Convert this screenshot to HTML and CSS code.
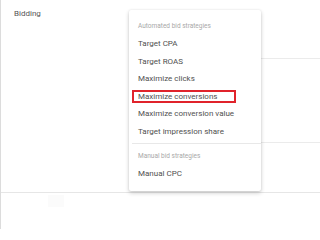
FILE: index.html
```html
<!DOCTYPE html>
<html>
<head>
<meta charset="utf-8">
<link rel="stylesheet" href="styles.css">
</head>
<body>
<div class="page">
  <section class="section">
    <div class="label">Bidding</div>
    <div class="content">
      <div class="row r1"></div>
      <div class="row r2"></div>
      <div class="row r3"></div>
    </div>
    <div class="menu">
      <div class="menu-header">Automated bid strategies</div>
      <div class="item">Target CPA</div>
      <div class="item">Target ROAS</div>
      <div class="item">Maximize clicks</div>
      <div class="item highlighted">Maximize conversions<span class="mark"></span></div>
      <div class="item">Maximize conversion value</div>
      <div class="item">Target impression share</div>
      <div class="divider"></div>
      <div class="menu-header">Manual bid strategies</div>
      <div class="item">Manual CPC</div>
    </div>
  </section>
  <div class="footer"><div class="ghost"></div></div>
</div>
</body>
</html>
```

FILE: styles.css
```css
html, body {
  margin: 0;
  padding: 0;
  background: #fff;
}
body {
  font-family: Roboto, "Liberation Sans", sans-serif;
  height: 229px;
  overflow: hidden;
}
.page {
  height: 229px;
  border-left: 1px solid #dcdcdc;
  box-sizing: border-box;
}
.section {
  position: relative;
  display: flex;
  height: 193px;
  box-sizing: border-box;
  border-bottom: 1px solid #e6e6e6;
}
.label {
  width: 130px;
  padding: 9px 0 0 13px;
  box-sizing: border-box;
  font-size: 8px;
  line-height: 10px;
  color: #555;
}
.content {
  flex: 1;
  display: flex;
  flex-direction: column;
}
.row {
  box-sizing: border-box;
}
.r1 {
  height: 59px;
  border-bottom: 1px solid #ebebeb;
}
.r2 {
  height: 84px;
  border-bottom: 1px solid #ebebeb;
}
.r3 {
  flex: 1;
}
.menu {
  position: absolute;
  left: 128px;
  top: 10px;
  width: 132px;
  padding: 8px 0 8.5px;
  background: #fff;
  box-shadow: 0 2px 4px rgba(0,0,0,0.2), 0 0 2px rgba(0,0,0,0.1);
  border-radius: 2px;
}
.menu-header {
  height: 17px;
  line-height: 17px;
  padding-left: 9px;
  font-size: 6.5px;
  color: #a8a8a8;
}
.item {
  position: relative;
  height: 17.5px;
  line-height: 17.5px;
  padding-left: 9px;
  font-size: 8px;
  color: #505050;
  white-space: nowrap;
}
.mark {
  position: absolute;
  left: 3px;
  top: 2px;
  width: 104px;
  height: 13.5px;
  box-sizing: border-box;
  border: 2px solid #e0232b;
}
.divider {
  height: 1px;
  margin: 3px 0 4px 3px;
  background: #e8e8e8;
}
.footer {
  padding: 2px 0 0 47px;
}
.ghost {
  width: 16px;
  height: 12px;
  background: #fbfbfb;
}
```
